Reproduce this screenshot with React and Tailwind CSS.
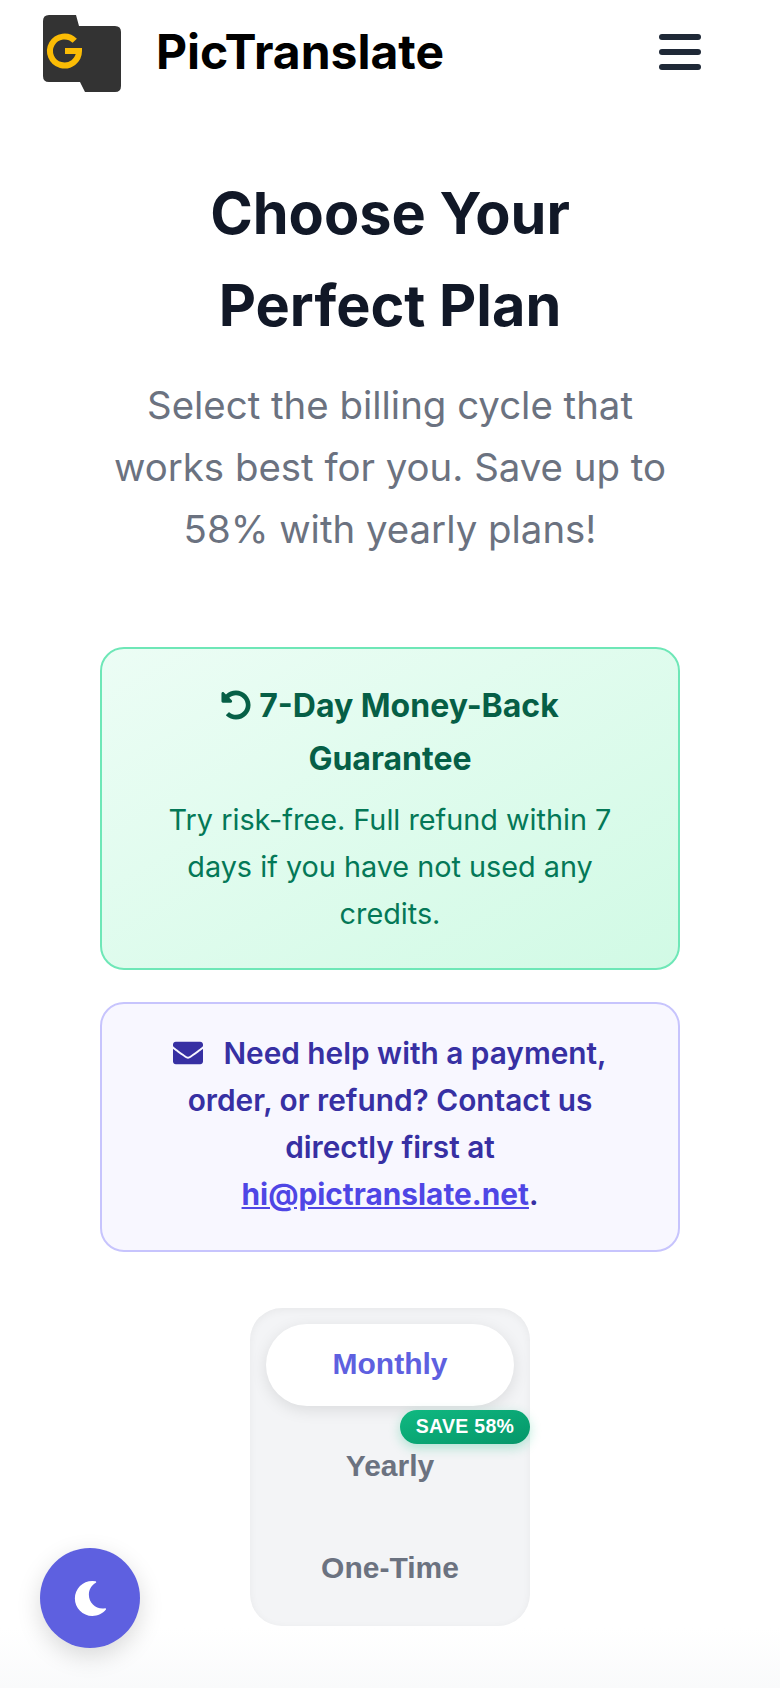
import { FaEnvelope, FaMoon, FaUndoAlt } from 'react-icons/fa';

const Logo = () => (
  <svg width="78" height="78" viewBox="0 0 78 78" className="shrink-0">
    <path
      d="M6 0H33L36 11H72Q78 11 78 17V71Q78 77 72 77H42L37 67H6Q0 67 0 61V6Q0 0 6 0Z"
      fill="#333333"
    />
    <path
      d="M31.75 25.75A14.5 14.5 0 1 0 36 36H22"
      fill="none"
      stroke="#fbbc05"
      strokeWidth="6"
    />
  </svg>
);

const Navbar = () => (
  <nav className="flex h-[108px] items-center justify-between pl-[43px] pr-[79px]">
    <div className="flex items-center gap-[35px]">
      <Logo />
      <span className="-mt-1 text-[48px] font-bold leading-none text-black">PicTranslate</span>
    </div>
    <div className="-mt-1 flex w-[42px] flex-col gap-[9px]">
      <span className="h-[6px] rounded-full bg-[#1f2937]" />
      <span className="h-[6px] rounded-full bg-[#1f2937]" />
      <span className="h-[6px] rounded-full bg-[#1f2937]" />
    </div>
  </nav>
);

const BillingToggle = () => (
  <div className="relative mx-auto flex w-[280px] flex-col gap-5 rounded-[32px] bg-[#f3f4f6] p-4 font-['Liberation_Sans',Arial,sans-serif] text-[30px] font-bold text-[#6b7280] shadow-[inset_0_2px_8px_rgba(0,0,0,0.05)]">
    <button className="h-[82px] rounded-[41px] bg-white pb-[3px] text-[#5e60e0] shadow-[0_4px_16px_rgba(0,0,0,0.1)]">
      Monthly
    </button>
    <button className="relative h-[82px] pb-[3px]">
      Yearly
      <span className="absolute -right-4 -top-4 flex h-[34px] w-[130px] items-center justify-center rounded-full bg-gradient-to-br from-[#10b981] to-[#059669] text-[19.5px] tracking-[0.3px] text-white shadow-[0_4px_12px_rgba(16,185,129,0.3)]">
        SAVE 58%
      </span>
    </button>
    <button className="h-[82px] pb-[3px]">One-Time</button>
  </div>
);

export default function App() {
  return (
    <div className="relative h-[1688px] overflow-hidden bg-white font-['Inter',sans-serif]">
      <Navbar />

      <header className="mx-auto mt-[59px] w-[600px] text-center">
        <h1 className="text-[57.6px] font-bold leading-[92px] text-[#111827]">
          Choose Your
          <br />
          Perfect Plan
        </h1>
        <p className="mt-[23px] text-[38.4px] leading-[62px] text-[#6b7280]">
          Select the billing cycle that works best for you. Save up to 58% with yearly plans!
        </p>
      </header>

      <section className="mx-[100px] mt-[87px] rounded-[24px] border-2 border-[#6ee7b7] bg-gradient-to-br from-[#ecfdf5] to-[#d1fae5] px-10 pb-[31px] pt-[30px] text-center">
        <h3 className="text-[32px] font-bold leading-[53px] text-[#065f46]">
          <FaUndoAlt className="mr-2 inline-block h-[30px] w-[30px] align-[-3px]" />
          7-Day Money-Back Guarantee
        </h3>
        <p className="mt-[11px] text-[28.8px] leading-[47px] text-[#047857]">
          Try risk-free. Full refund within 7 days if you have not used any credits.
        </p>
      </section>

      <section className="mx-[100px] mt-[32px] rounded-[24px] border-2 border-[#c7c4fd] bg-[#f8f7ff] px-10 pb-[32px] pt-[26px] text-center text-[29.8px] font-semibold leading-[47px] text-[#3730a3]">
        <FaEnvelope className="mr-5 inline-block h-[30px] w-[30px] align-[-4px]" />
        Need help with a payment, order, or refund? Contact us directly first at{' '}
        <a href="#contact" className="font-bold text-[#4f46e5] underline">
          hi@pictranslate.net
        </a>
        .
      </section>

      <div className="mt-[56px]">
        <BillingToggle />
      </div>

      <div className="absolute inset-x-0 bottom-0 h-[60px] bg-gradient-to-b from-white to-[#f9fafb]" />

      <button className="absolute bottom-[40px] left-[40px] flex h-[100px] w-[100px] items-center justify-center rounded-full bg-[#5e60e0] text-white shadow-[0_8px_24px_rgba(0,0,0,0.15)]">
        <FaMoon className="h-[35px] w-[35px]" />
      </button>
    </div>
  );
}
